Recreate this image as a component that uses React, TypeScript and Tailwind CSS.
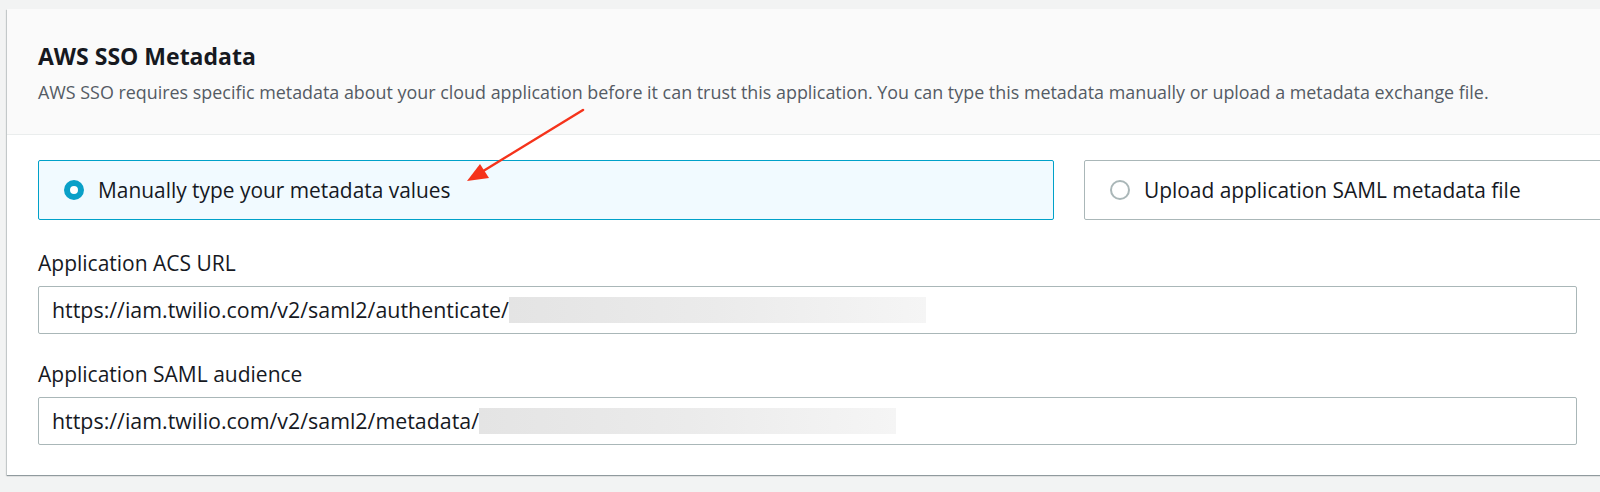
import React from "react"

const font = { fontFamily: '"Open Sans", "Noto Sans", Arial, sans-serif' }

function Redacted({ width }: { width: number }) {
  return (
    <span
      className="inline-block h-[26px] align-middle bg-gradient-to-r from-[#e4e4e4] via-[#ebebeb] to-[#f5f5f5]"
      style={{ width }}
    />
  )
}

function RadioTile({ selected, label }: { selected?: boolean; label: string }) {
  return (
    <div
      className={
        "flex h-[60px] w-[1016px] shrink-0 items-center gap-[14px] rounded-[2px] border pl-[25px] " +
        (selected ? "border-[#00a1c9] bg-[#f1faff]" : "border-[#aab7b8] bg-white")
      }
    >
      {selected ? (
        <span className="box-border h-[20px] w-[20px] rounded-full border-[6px] border-[#0aa0c8] bg-white" />
      ) : (
        <span className="box-border h-[20px] w-[20px] rounded-full border-[2px] border-[#aab7b8] bg-white" />
      )}
      <span className="text-[20.9px] leading-[28px] text-[#16191f]">{label}</span>
    </div>
  )
}

function Field({ label, prefix, blur }: { label: string; prefix: string; blur: number }) {
  return (
    <div className="flex flex-col">
      <label className="mb-[10px] text-[21px] leading-[26px] text-[#16191f]">{label}</label>
      <div className="flex h-[48px] w-[1539px] items-center rounded-[2px] border border-[#aab7b8] bg-white px-[13px] text-[21.4px] text-[#16191f]">
        <span>{prefix}</span>
        <Redacted width={417} />
      </div>
    </div>
  )
}

export default function App() {
  return (
    <div className="relative h-[492px] w-[1600px] overflow-hidden bg-[#f2f3f3]" style={font}>
      <div className="ml-[7px] mt-[9px] w-[1640px] bg-white shadow-[0_1px_1px_0_rgba(0,28,36,0.3),-1px_1px_1px_0_rgba(0,28,36,0.15)]">
        {/* header */}
        <div className="h-[126px] border-b border-[#eaeded] bg-[#fafafa] px-[31px] pt-[32px]">
          <h2 className="text-[23px] font-bold leading-[30px] text-[#16191f]">AWS SSO Metadata</h2>
          <p className="mt-[9px] text-[17.9px] leading-[24px] text-[#545b64]">
            AWS SSO requires specific metadata about your cloud application before it can trust this application. You can type this metadata manually or upload a metadata exchange file.
          </p>
        </div>

        {/* body */}
        <div className="flex flex-col px-[31px] pb-[30px] pt-[25px]">
          <div className="flex gap-[30px]">
            <RadioTile selected label="Manually type your metadata values" />
            <RadioTile label="Upload application SAML metadata file" />
          </div>
          <div className="mt-[30px] flex flex-col gap-[27px]">
            <Field label="Application ACS URL" prefix="https://iam.twilio.com/v2/saml2/authenticate/" blur={417} />
            <Field label="Application SAML audience" prefix="https://iam.twilio.com/v2/saml2/metadata/" blur={417} />
          </div>
        </div>
      </div>

      {/* annotation arrow */}
      <svg className="pointer-events-none absolute left-0 top-0" width="1600" height="492">
        <line x1="583" y1="110" x2="480" y2="173" stroke="#f5331b" strokeWidth="2.5" strokeLinecap="round" />
        <polygon points="467,181 480,164 489,178" fill="#f5331b" />
      </svg>
    </div>
  )
}
